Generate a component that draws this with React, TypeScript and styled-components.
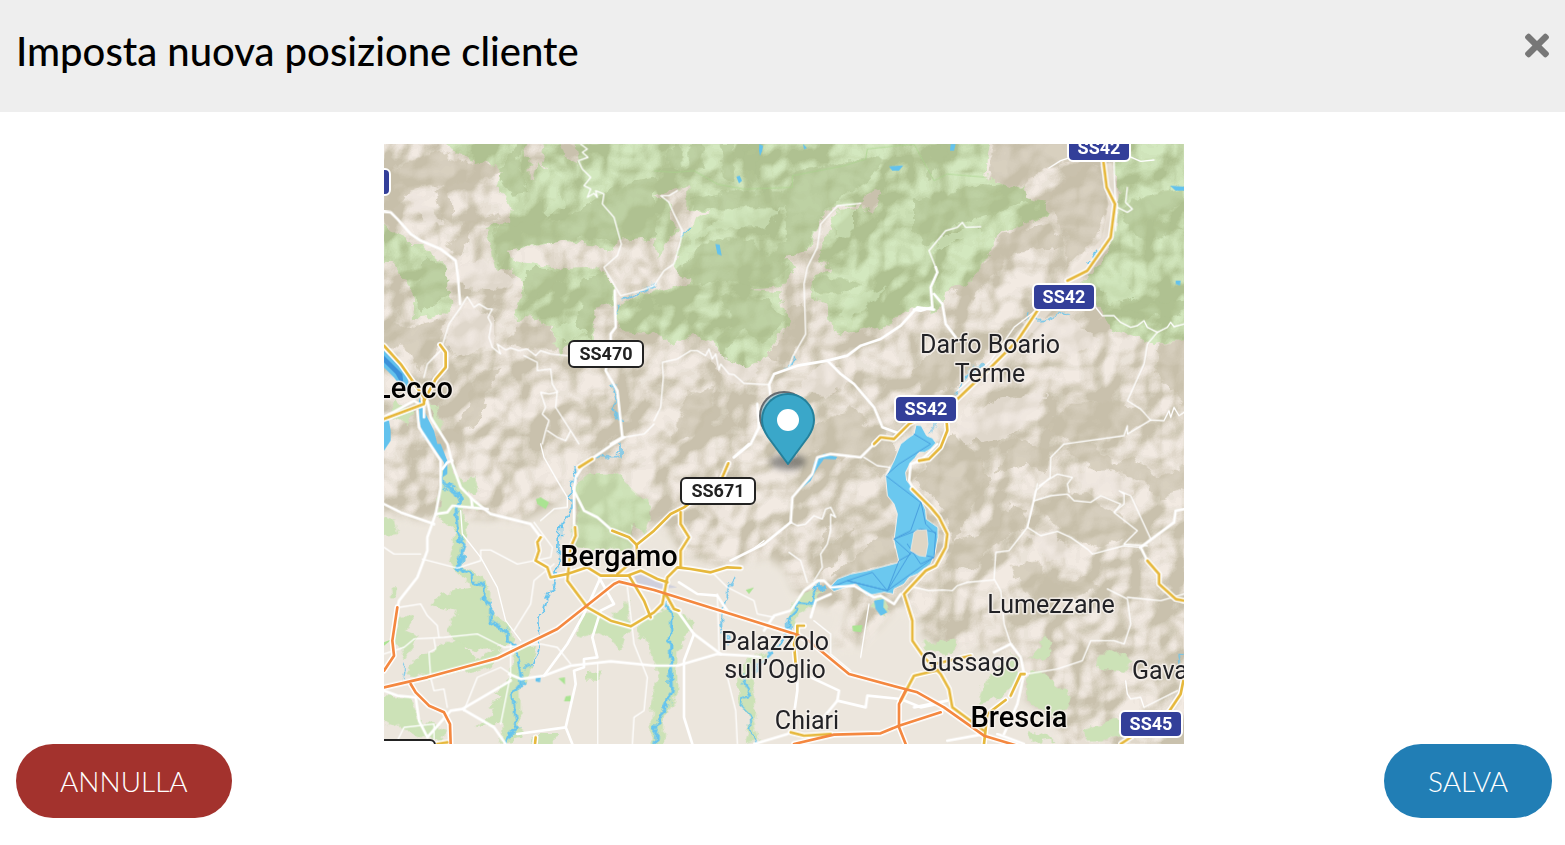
import React from "react";
import styled, { createGlobalStyle } from "styled-components";
import { FaTimes } from "react-icons/fa";

const GlobalStyle = createGlobalStyle`
  *, *::before, *::after { box-sizing: border-box; }
  body {
    margin: 0;
    background: #fff;
    color: #000;
    font-family: Lato, "Liberation Sans", sans-serif;
  }
`;

const Header = styled.header`
  display: flex;
  align-items: flex-start;
  justify-content: space-between;
  height: 112px;
  padding: 28px 16px 0;
  background: #eee;
`;

const Title = styled.h1`
  margin: 0;
  font-size: 40px;
  line-height: 46px;
  font-weight: 500;
`;

const CloseButton = styled.button`
  display: flex;
  padding: 0;
  border: 0;
  background: none;
  color: #777;
  cursor: pointer;
`;

const CloseIcon = styled(FaTimes)`
  width: 24px;
  height: 35px;
`;

const Content = styled.main`
  padding: 32px 13px 24px 16px;
`;

const MapFrame = styled.section`
  display: flex;
  justify-content: center;
`;

const MapDrawing = styled.svg`
  display: block;
  width: 800px;
  max-width: 100%;
  height: auto;
  overflow: hidden;
`;

const Actions = styled.footer`
  display: flex;
  justify-content: space-between;
`;

const ActionButton = styled.button<{ $color: string }>`
  height: 74px;
  padding: 0 44px;
  border: 0;
  border-radius: 37px;
  background: ${(p) => p.$color};
  color: #fff;
  font-family: inherit;
  font-size: 28px;
  font-weight: 300;
  line-height: 36px;
  text-transform: uppercase;
  cursor: pointer;
`;

const PlaceName = styled.text<{ $city?: boolean }>`
  font-family: Roboto, "Liberation Sans", sans-serif;
  font-size: ${(p) => (p.$city ? 29 : 25)}px;
  font-weight: ${(p) => (p.$city ? 500 : 400)};
  fill: ${(p) => (p.$city ? "#000" : "#222226")};
  stroke: rgba(245, 240, 235, 0.85);
  stroke-width: 3px;
  stroke-linejoin: round;
  paint-order: stroke;
  text-anchor: middle;
`;

const ShieldText = styled.text`
  font-family: Roboto, "Liberation Sans", sans-serif;
  font-size: 18px;
  font-weight: 700;
  text-anchor: middle;
`;

/* The geography is stored at three units to the pixel, in six survey tiles. */
type Tile = "TL" | "TM" | "TR" | "BL" | "BM" | "BR";
type Shape = [Tile, string];

const origin: Record<Tile, [number, number]> = {
  TL: [0, 0],
  TM: [810, 0],
  TR: [1590, 0],
  BL: [0, 900],
  BM: [810, 900],
  BR: [1590, 900],
};

const move = (tile: Tile) => `translate(${origin[tile][0]} ${origin[tile][1]})`;

const forests: Shape[] = [
  ["TL", "150,-40 200,20 240,28 280,60 320,50 350,90 340,130 380,180 385,235 305,245 320,300 335,385 380,370 410,410 415,460 395,500 395,535 430,515 510,550 505,600 530,635 560,600 630,590 625,500 690,480 690,400 640,380 700,300 810,285 820,360 800,430 700,490 705,560 810,570 870,605 930,570 990,600 1020,640 1090,670 1140,650 1170,600 1215,540 1195,470 1300,480 1340,560 1370,570 1500,545 1590,490 1650,500 1670,490 1680,430 1720,430 1770,400 1810,340 1850,260 1995,215 1980,170 1930,160 1920,120 1890,130 1800,100 1825,-40"],
  ["TL", "-40,200 70,300 110,300 190,370 190,450 215,480 190,510 90,525 85,440 30,360 -40,360"],
  ["TR", "605,-40 600,60 615,150 600,290 560,350 500,430 560,500 600,560 720,600 850,580 850,-40"],
];
const clearings: Shape[] = [
  ["TL", "430,-20 480,-20 475,40 490,75 460,50 450,115 440,110 440,60 420,30"],
  ["TL", "525,-20 570,-20 580,65 550,50"],
  ["TL", "375,320 450,310 540,290 620,300 670,320 710,290 785,285 730,310 715,370 740,400 810,390 820,440 700,460 660,370 540,375 450,360 385,350"],
  ["TM", "0,150 100,130 100,200 165,205 95,250 60,375 110,420 0,440 -70,450 -100,400 -60,390 0,360 65,260 40,170"],
  ["TM", "620,180 660,138 682,145 655,210 620,190 540,200 520,280 495,350 535,375 480,390 470,460 520,480 530,560 460,700 400,600 405,540 385,470 380,445 285,437 380,430 430,370 390,350 470,310 495,240 530,190"],
];
const darkSlopes: Shape[] = [
  ["TL", "0,90 60,60 170,20 230,55 340,60 350,90 270,110 180,130 150,120 100,130 20,200 0,190"],
  ["TL", "150,140 190,130 210,240 180,225"],
  ["TL", "240,240 330,205 350,220 260,240 230,340 180,310 210,290"],
  ["TL", "0,530 90,550 190,520 150,620 110,690 70,610 0,600"],
  ["TL", "280,690 350,670 310,740 280,850 210,860 250,790"],
  ["TL", "400,550 500,540 520,620 440,610 370,600"],
  ["TM", "400,500 450,480 450,590 400,650 330,640 400,570"],
  ["TM", "100,750 180,730 170,800 120,880 50,900"],
  ["TM", "460,860 590,790 640,830 560,890 420,960"],
  ["TR", "240,-20 480,-20 470,50 360,90 330,120 220,110 230,50"],
  ["TR", "410,160 500,70 570,60 590,170 540,290 460,370 460,280 400,180"],
  ["TR", "270,265 410,240 460,300 290,330 230,400 180,470 100,430 220,350"],
  ["TR", "0,680 80,600 230,570 300,540 120,730 30,750"],
  ["TR", "470,780 600,770 690,800 710,830 620,880 470,900 390,850"],
  ["TR", "740,600 830,580 830,800 720,680"],
  ["BM", "470,10 600,-60 690,-50 735,40 690,95 610,40 520,40"],
  ["BM", "530,400 700,250 735,350 640,380"],
  ["BM", "500,320 540,180 520,300 600,250 550,350 480,400"],
  ["BR", "50,40 120,-30 190,40 230,110 170,200 120,300 90,190 0,110"],
  ["BR", "210,320 330,250 340,190 290,180 250,250 130,290 90,360 190,380"],
  ["BR", "240,90 310,-20 410,20 400,90 340,60"],
  ["BR", "450,20 520,-20 600,60 660,40 730,100 820,60 820,130 740,170 690,120 600,80 560,90"],
  ["BR", "350,170 520,150 630,230 660,270 560,310 450,270"],
  ["BR", "290,370 370,350 430,430 520,390 560,430 460,470 330,440"],
];
const lightSlopes: Shape[] = [
  ["TL", "60,150 110,150 180,240 130,250 100,200"],
  ["TL", "220,370 300,340 400,410 350,440 240,430"],
  ["TL", "180,580 250,480 330,520 330,600 210,640"],
  ["TM", "150,620 240,640 320,690 260,720 190,680"],
  ["TM", "460,690 530,650 590,710 520,760 440,750"],
  ["TR", "120,850 260,760 400,750 300,870 160,900"],
  ["TR", "320,530 450,510 560,590 480,640 380,600"],
  ["BR", "340,270 420,260 480,340 390,350"],
  ["BR", "470,90 600,80 660,150 560,150"],
];
const darkWoods: Shape[] = [
  ["TL", "330,250 540,225 690,130 810,100 810,280 700,300 620,280 420,310 340,370"],
  ["TL", "400,50 420,0 400,0 340,90 380,150 430,140"],
  ["TL", "90,440 130,340 190,370 190,450 110,510"],
  ["TL", "410,410 450,370 530,380 500,440 430,460"],
  ["TL", "600,400 690,390 680,480 630,500 620,590 580,540"],
  ["TM", "110,170 230,140 410,140 420,90 580,50 700,40 640,110 520,190 460,310 380,370 270,400 400,280 390,190 260,190 120,200"],
  ["TM", "150,300 280,280 330,330 400,370 330,430 240,410 120,420 60,390"],
  ["TM", "200,450 340,470 400,520 330,600 260,560 210,640 190,590 240,530"],
  ["TM", "480,400 560,400 630,420 560,450 480,450"],
  ["TM", "40,20 80,0 90,80 50,80"],
  ["TM", "100,0 140,0 150,80 110,80"],
  ["TM", "200,0 240,0 240,110 210,110"],
  ["TM", "280,0 310,0 300,120 270,100"],
  ["TR", "0,170 200,120 330,130 370,170 260,200 110,250 40,310 0,260"],
  ["TR", "40,20 100,0 80,70 40,110"],
  ["TR", "620,200 700,150 810,130 810,170 720,230 810,250 700,290 640,260"],
  ["TR", "600,430 690,480 810,470 800,510 700,520 620,490"],
];
const lightWoods: Shape[] = [
  ["TL", "480,190 530,150 540,190 490,220"],
  ["TL", "720,330 790,300 810,330 760,380 720,370"],
  ["TL", "510,560 560,535 610,560 550,600"],
  ["TM", "110,280 240,200 380,190 340,250 200,250 130,290 70,370"],
  ["TM", "530,220 600,190 600,260 550,290"],
  ["TM", "560,520 600,450 700,430 640,490 580,540"],
  ["TR", "80,280 170,250 210,270 110,300 60,330"],
  ["TR", "550,410 620,390 660,460 590,480"],
];
const bergamoHill =
  "570,130 610,90 700,90 750,140 795,180 800,220 780,265 740,240 750,300 740,325 580,310 560,280 580,200";
const cityGreens: Shape[] = [
  ["BL", bergamoHill],
  ["BL", "170,80 200,60 230,110 270,100 282,130 250,150 290,190 235,200 250,260 240,320 230,370 290,390 322,440 320,500 380,550 390,600 300,620 220,600 190,560 215,500 140,480 170,450 260,430 220,380 195,350 215,270 160,220 170,120"],
  ["BL", "385,610 450,600 440,690 410,720 410,880 350,900 370,760 330,750 380,700"],
  ["BL", "-20,220 30,230 40,270 -20,280"],
  ["BL", "50,520 95,510 70,560 100,580 60,650 45,610 20,600"],
  ["BL", "60,690 100,640 190,590 240,600 280,650 330,610 370,630 310,670 220,690 130,700"],
  ["BL", "590,520 640,500 680,530 730,470 740,550 710,620 680,590 640,570 600,580 575,570"],
  ["BL", "600,680 650,680 640,710 610,710"],
  ["BL", "-20,760 80,760 100,820 190,860 170,900 40,850 -20,820"],
  ["BL", "310,780 380,740 380,850 340,840 280,850 330,810"],
  ["BL", "450,870 520,870 500,920 440,920"],
  ["BL", "20,430 45,430 40,460 25,460"],
  ["BM", "0,510 60,480 120,540 90,590 70,620 70,740 30,830 30,920 -10,920 -10,800 10,700 -20,590 -50,580 -40,520"],
  ["BM", "400,530 430,460 510,430 490,470 440,510 410,550"],
  ["BM", "250,690 290,640 350,620 290,680 310,760 300,820 320,890 270,900 290,830 250,780"],
  ["BM", "650,480 690,460 700,510 670,500"],
  ["BR", "20,595 120,590 120,630 50,620"],
  ["BR", "215,710 240,680 300,630 320,680 280,750 190,780"],
  ["BR", "340,690 380,680 470,760 440,830 340,770"],
  ["BR", "350,640 400,570 420,620 390,650"],
  ["BR", "555,630 620,625 660,650 620,690 550,670"],
  ["BR", "510,860 560,840 610,820 640,860 560,890 520,890"],
  ["BR", "340,860 430,890 350,900"],
  ["TL", "35,765 85,810 75,840 20,820"],
  ["TL", "145,785 160,790 175,860 160,865"],
];
const parks: Shape[] = [
  ["BL", "456,165 470,160 495,175 485,195 460,180"],
  ["BL", "523,703 543,700 543,722"],
  ["BL", "545,757 560,755 560,772 540,772"],
  ["BM", "275,438 300,430 285,450"],
  ["BM", "595,545 625,543 622,565 597,562"],
  ["BL", "0,595 25,585 0,605"],
];

const water: Shape[] = [
  ["TL", "0,620 20,640 50,670 70,700 80,750 60,740 30,700 0,670"],
  ["TL", "105,760 120,800 150,860 160,900 180,930 190,960 150,910 120,880 105,830"],
  ["TL", "0,820 15,830 20,860 20,890 0,920"],
  ["BL", "140,0 170,0 190,50 190,90 175,100 180,55"],
  ["TM", "316,0 327,5 325,20 318,36 315,20"],
  ["TM", "247,98 257,95 264,110 255,118"],
  ["TM", "184,300 197,302 203,335 190,330"],
  ["TM", "447,0 459,12 450,16"],
  ["TM", "705,67 748,64 735,80 715,80"],
  ["TR", "110,0 125,0 120,20 108,20"],
  ["TR", "768,125 810,128 810,140 785,140"],
  ["TR", "785,410 800,410 798,425 785,420"],
  ["BM", "475,95 480,55 510,30 550,38 545,46 510,45 485,80 470,110 440,135"],
  ["BL", "455,700 470,700 468,715 455,712"],
  ["BM", "660,470 690,465 688,490 700,505 680,515 665,495"],
];
const lake =
  "1596,843 1612,845 1620,860 1628,875 1645,882 1656,897 1640,915 1622,925 1605,925 1593,942 1580,955 1565,985 1568,1010 1600,1040 1612,1070 1625,1098 1627,1125 1645,1138 1662,1150 1662,1180 1653,1230 1640,1260 1600,1290 1575,1300 1560,1320 1530,1335 1528,1350 1500,1345 1450,1355 1432,1335 1415,1320 1370,1335 1350,1342 1337,1330 1360,1305 1400,1290 1450,1280 1545,1255 1530,1190 1540,1110 1530,1080 1510,1055 1505,1000 1530,950 1550,900 1575,880 1590,870";
const ferryLines: Shape[] = [
  ["BM", "780,-30 830,0 735,60 695,95 800,175 770,260 720,285 770,330 735,350 700,440 580,410 530,430"],
  ["BM", "700,440 655,385 580,410 700,440 770,325 840,340 770,390 700,440"],
  ["BM", "720,285 800,255 845,265 840,340 800,360 760,300"],
  ["BM", "800,170 815,240 845,270"],
];
const rivers: [Tile, string, number][] = [
  ["BL", "175,100 180,122 215,140 235,170 215,200 220,270 240,300 225,375 260,390 265,415 300,425 300,470 320,480 320,530 370,560 370,590 395,605 410,690 410,720 385,750 395,840 405,850 370,880 365,900", 9],
  ["BL", "705,0 705,35 665,35 635,47", 4],
  ["BL", "570,70 575,100 560,120 565,190 530,250 525,370 515,420 490,460 480,500 462,520 465,610 445,660 420,670", 5],
  ["BL", "58,660 55,690 62,705", 4],
  ["BM", "35,450 50,520 50,640 55,740 30,800 10,840 0,900", 10],
  ["BM", "515,425 485,425 475,480 435,475 430,500 400,530 400,560 350,630 300,680", 8],
  ["BM", "265,680 275,720 295,750 265,755 260,790 290,820 295,870 310,900", 6],
  ["BM", "240,400 225,410 220,460 205,490 205,550 225,600", 5],
  ["TM", "418,635 412,655 400,670", 5],
  ["TM", "105,245 90,260 88,280", 4],
  ["TL", "708,470 780,440 810,425", 5],
  ["TL", "697,480 702,510", 4],
  ["TL", "682,715 697,765 690,795 713,840", 5],
  ["TR", "560,300 550,325 530,340 525,360", 5],
  ["TR", "465,505 430,515 400,528 370,530 340,530 345,510", 4],
  ["TR", "215,665 180,668 130,740 125,755", 5],
  ["TR", "62,835 45,870", 3],
  ["BR", "810,625 795,635 800,660", 4],
];
const minorRoads: Shape[] = [
  ["TL", "590,0 610,15 595,25 612,40 583,50 595,75 620,100 600,125 620,135 610,160 630,148 640,160 635,140 660,150 655,180 690,220 712,300 700,335 660,370 695,430 710,455 770,440 810,425 840,380 870,360 890,290 895,260 870,210 855,175 830,155 855,155 880,140"],
  ["TL", "230,490 250,458 270,490 285,480 310,495 325,495 312,520 322,540 315,580 325,610 350,630 340,600 365,618 380,612 405,620 430,615 455,635 470,620 500,630 550,635"],
  ["TL", "420,635 460,655 460,680 500,675 505,720 520,745 495,750 470,745 485,790 475,810 495,830 485,860 475,900"],
  ["TL", "520,740 515,790 560,860 545,890 520,880 490,860"],
  ["TL", "560,860 585,900"],
  ["TL", "120,700 130,660 170,620 195,540 230,490"],
  ["TL", "720,880 780,870 810,840"],
  ["TM", "345,722 270,718 240,692 225,690 200,660 195,678 185,630 175,645 165,615 155,635 130,620 110,620 70,645 25,655 28,700 20,790 0,830"],
  ["TM", "620,178 550,185 500,240 490,310 460,370 450,420 455,570 415,640 405,670"],
  ["TR", "65,370 45,320 95,260 130,250 145,235 155,250 200,248"],
  ["TR", "405,72 440,50 470,40 640,35 680,52 720,48"],
  ["TR", "600,50 603,150 610,190 605,260"],
  ["TR", "610,190 640,205 655,195 635,175 640,130"],
  ["TR", "545,490 565,515 600,515 620,535 650,550 670,545 690,530 700,550 730,565 760,550 770,535 780,548 810,540"],
  ["TR", "730,565 700,600 690,660 640,770 680,795 710,828 640,870 640,845 630,875 450,900 410,940 408,1000 365,1040 340,1150"],
  ["TR", "710,828 750,830 765,800 770,820 780,790 795,815 810,805"],
  ["TR", "365,500 300,550 230,650 130,740"],
  ["BR", "360,170 410,155 460,150 480,170 530,175 560,155 620,180 600,205 625,225 670,260 630,300 700,305"],
  ["BR", "375,125 430,90 475,100 460,120 465,145"],
  ["BR", "600,205 630,180 630,150 615,140 650,155 710,285"],
  ["BR", "340,250 380,275 430,262 470,280 520,315 535,330 630,305 680,310"],
  ["BR", "370,120 360,170 340,250 285,320 245,325 240,405 260,440 270,540 290,600"],
  ["BR", "0,430 45,440 85,438 115,440 130,425 160,415 240,408"],
  ["BR", "580,435 640,465 650,540 630,600 600,590 530,590 505,650 430,675 340,690"],
  ["BR", "640,460 740,470 810,450"],
  ["BR", "635,710 640,750 650,765 680,760 690,790 790,740"],
  ["BM", "630,40 670,65 708,70 695,95"],
  ["BM", "410,235 430,245 455,240 480,215 505,225 515,195 530,190 545,220 530,210 530,260 520,300 500,330 505,370 480,410"],
  ["BM", "460,415 440,350 405,325"],
  ["BM", "230,350 290,320 330,290"],
  ["BM", "180,390 220,430 300,470 310,510 360,520"],
  ["BM", "190,450 195,620"],
  ["BM", "220,700 245,800 250,900"],
  ["BM", "480,530 530,570 530,630 590,680"],
  ["BM", "645,480 620,640"],
  ["BL", "470,0 480,40 520,110 550,160 550,190 510,195 470,230"],
  ["BL", "230,200 235,270 290,340 340,430 365,530 410,590"],
  ["BL", "115,345 220,372 290,350 290,318 320,318 400,360 500,340 505,310 450,235"],
  ["BL", "0,310 30,330 110,330"],
  ["BL", "45,490 110,480 130,515 160,545 165,580"],
  ["BL", "90,585 180,580 280,570 360,610 470,600 520,610 560,660"],
  ["BL", "510,360 450,410 440,480 390,560"],
  ["BL", "640,660 640,900"],
  ["BL", "730,430 750,600 790,700 780,800 750,820 745,900"],
  ["BL", "240,800 280,700 350,670 380,690 350,840"],
  ["BL", "0,630 60,610 90,585"],
  ["BL", "150,585 155,615 135,625 140,700 150,740 180,735 190,790"],
  ["BL", "380,600 380,700"],
  ["BL", "35,900 60,850 150,840 150,900"],
];
const mainRoads: Shape[] = [
  ["TL", "0,203 20,205 40,225 80,270 110,290 170,315 215,350 222,400 228,480"],
  ["TL", "692,440 695,550 680,570 680,600 665,680 700,740 715,880 680,900"],
  ["TL", "720,880 680,905 600,960 575,1000 570,1040 600,1100 640,1120 685,1160"],
  ["BL", "570,130 570,240"],
  ["TL", "0,820 90,770 120,790 120,820"],
  ["TL", "130,770 140,820 190,900 205,960 230,1030 270,1070 320,1110 440,1140 470,1180"],
  ["BL", "100,-100 105,-50 170,50 170,130 155,210 130,280 130,320 100,400 45,470 38,500"],
  ["BL", "0,180 50,205 150,240"],
  ["BL", "155,210 190,205 205,185 310,195"],
  ["BL", "265,190 262,165"],
  ["BL", "175,75 190,55 205,50"],
  ["BL", "0,740 40,755 95,760 105,830 130,880 200,800 235,795 380,710"],
  ["BL", "235,795 330,850 365,900"],
  ["BL", "375,690 410,705 480,695 560,665 680,652 810,665 880,665 1000,630 1090,635 1130,640"],
  ["BL", "480,695 550,600 600,510 650,400"],
  ["BL", "645,400 690,480 650,500 625,580 640,640 600,645 600,670 570,680 575,720 545,850 400,870"],
  ["BL", "545,850 565,900"],
  ["BM", "75,415 130,450 190,455 220,500"],
  ["BM", "70,500 120,570 90,650 90,820 115,900"],
  ["BM", "120,570 200,630"],
  ["BM", "285,0 240,40"],
  ["BM", "410,235 415,160 475,90 490,40 530,30 620,40 655,5"],
  ["BM", "410,235 330,300 230,350"],
  ["BM", "330,560 360,515 410,500 450,440 490,410 510,410 530,430 600,425 660,460 680,455 720,480 740,450"],
  ["BM", "530,450 485,470 470,520"],
  ["BM", "430,660 430,740 420,810"],
  ["BM", "470,700 555,740 550,770 635,790 640,755 740,765 800,790 850,780"],
  ["BM", "550,770 500,830"],
  ["BM", "300,900 400,870"],
  ["TM", "350,760 345,722 360,690 430,665 520,650 580,635 620,605 680,585 740,545 790,490 840,497"],
  ["TM", "520,650 560,690 600,720 660,790 685,850 740,870"],
  ["TM", "315,850 310,780"],
  ["TM", "315,850 290,900 240,940"],
  ["TR", "65,370 70,385 50,430 55,490 20,500 0,497"],
  ["TR", "60,450 85,480 95,540 125,580"],
  ["BM", "850,0 800,50 770,60 765,110 780,140"],
  ["BR", "680,310 780,235 785,200 810,195"],
  ["BR", "680,310 700,350"],
  ["BR", "240,625 290,600 320,640 330,690"],
  ["BR", "100,770 0,790"],
  ["BR", "210,870 100,890"],
  ["BR", "250,870 330,900"],
  ["BR", "270,870 310,780 330,690"],
];
const yellowRoads: Shape[] = [
  ["TL", "0,605 50,660 120,760 120,780 0,825"],
  ["TL", "168,602 185,625 185,670 155,705 120,770"],
  ["BL", "585,70 625,45"],
  ["BL", "470,280 460,295 465,320 455,350 490,370 500,400 550,390 610,370 650,395 730,395 770,380 820,405 850,415"],
  ["BL", "573,250 575,275 560,310 550,410 610,490 680,530 740,547 810,505 835,480 850,400 880,370 920,375 980,385 1030,370 1070,372"],
  ["BL", "685,260 735,280 758,302 810,260 860,210 900,190 940,160"],
  ["BL", "758,302 760,340 700,390"],
  ["BL", "735,395 780,470 800,520"],
  ["BL", "890,205 890,240 915,280 890,320 890,370"],
  ["BM", "35,450 60,495 75,500"],
  ["BM", "223,58 205,100"],
  ["BM", "450,545 430,545 430,570 420,600 425,660"],
  ["TM", "660,900 680,880 720,885 765,840 800,820"],
  ["TR", "568,50 578,130 603,180 590,280 520,380 460,410"],
  ["TR", "370,500 310,590 225,675 125,770"],
  ["TR", "97,820 100,860 80,910 45,945 15,950"],
  ["BR", "-5,135 50,190 75,220 100,270 95,310 65,365 35,380 -30,450 -5,530 -5,590 30,640 80,690 105,735 115,790 210,860"],
  ["BR", "85,675 0,695 -40,770"],
  ["BR", "60,660 170,635"],
  ["BR", "332,690 320,690 290,755"],
  ["BR", "275,768 220,810 210,900"],
  ["BR", "700,350 735,390 735,420 785,465 810,470"],
  ["BR", "810,700 800,750 760,810"],
  ["BR", "620,900 650,880"],
  ["BM", "410,865 450,875 530,870"],
  ["BL", "160,900 190,895"],
  ["BL", "455,880 453,900"],
];
const motorways: Shape[] = [
  ["BL", "0,730 130,700 340,643 520,555 690,420 705,413 810,438 1240,572 1280,595 1395,690 1600,745 1680,790 1800,875 1900,905"],
  ["BL", "40,490 25,590 30,635 0,680"],
  ["BL", "80,720 95,745 135,785 180,805 198,840 200,900"],
  ["BM", "420,900 540,872 680,868 735,845 860,805"],
  ["BM", "755,740 735,780 735,850 755,900"],
];

const Polygons = ({ shapes, fill }: { shapes: Shape[]; fill: string }) => (
  <g fill={fill}>
    {shapes.map(([tile, points], i) => (
      <polygon key={i} points={points} transform={move(tile)} />
    ))}
  </g>
);

const Lines = ({ shapes, color, width }: { shapes: Shape[]; color: string; width: number }) => (
  <g fill="none" stroke={color} strokeWidth={width} strokeLinejoin="round" strokeLinecap="round">
    {shapes.map(([tile, points], i) => (
      <polyline key={i} points={points} transform={move(tile)} />
    ))}
  </g>
);

/* Stepped relief: twenty tones from the shaded slope to the sunlit one. */
const tones = (dark: number, light: number) =>
  Array.from({ length: 20 }, (_, i) => {
    const step = Math.min(1, Math.max(0, (i - 8) / 11));
    return (dark + (light - dark) * step).toFixed(3);
  }).join(" ");

type ReliefProps = { id: string; dark: [number, number, number]; light: [number, number, number] };
const Relief = ({ id, dark, light }: ReliefProps) => (
  <filter id={id} x="0" y="0" width="100%" height="100%" colorInterpolationFilters="sRGB">
    <feTurbulence type="fractalNoise" baseFrequency="0.018" numOctaves="3" seed="11" result="noise" />
    <feDiffuseLighting in="noise" surfaceScale="22" diffuseConstant="1" lightingColor="#fff">
      <feDistantLight azimuth="225" elevation="50" />
    </feDiffuseLighting>
    <feComponentTransfer>
      <feFuncR type="discrete" tableValues={tones(dark[0], light[0])} />
      <feFuncG type="discrete" tableValues={tones(dark[1], light[1])} />
      <feFuncB type="discrete" tableValues={tones(dark[2], light[2])} />
    </feComponentTransfer>
  </filter>
);

type ShieldProps = { x: number; y: number; width: number; label: string; blue?: boolean };
const Shield = ({ x, y, width, label, blue }: ShieldProps) => (
  <g>
    <rect
      x={x}
      y={y}
      width={width}
      height={26}
      rx={5}
      fill={blue ? "#333f99" : "#fff"}
      stroke={blue ? "#fff" : "#222"}
      strokeWidth={2}
    />
    {label && (
      <ShieldText x={x + width / 2} y={y + 19} fill={blue ? "#fff" : "#222"}>
        {label}
      </ShieldText>
    )}
  </g>
);

const pinPath = "M404 320 L384 293 Q378 284 378 276 A26 26 0 0 1 430 276 Q430 284 424 293 Z";

const PositionMap = () => (
  <MapDrawing viewBox="0 0 800 600" role="img" aria-label="Mappa della posizione cliente">
    <defs>
      <Relief id="hills" dark={[0.79, 0.76, 0.68]} light={[0.95, 0.92, 0.89]} />
      <Relief id="woods" dark={[0.69, 0.76, 0.57]} light={[0.83, 0.91, 0.75]} />
      <filter id="soft" x="-10%" y="-10%" width="120%" height="120%">
        <feGaussianBlur stdDeviation="12" />
      </filter>
      <filter id="rough" x="0" y="0" width="100%" height="100%">
        <feTurbulence type="fractalNoise" baseFrequency="0.03" numOctaves="3" seed="4" />
        <feDisplacementMap in="SourceGraphic" scale="34" xChannelSelector="R" yChannelSelector="G" />
      </filter>
      <filter id="pinShade" x="-50%" y="-100%" width="200%" height="300%">
        <feGaussianBlur stdDeviation="3" />
      </filter>
      <mask id="woodland" maskUnits="userSpaceOnUse" x="0" y="0" width="800" height="600">
        <g transform="scale(0.333333)">
          <g filter="url(#rough)">
            <Polygons shapes={forests} fill="#fff" />
            <Polygons shapes={clearings} fill="#000" />
          </g>
          <Polygons shapes={[["BL", bergamoHill]]} fill="#777" />
        </g>
      </mask>
    </defs>

    <rect width="800" height="600" filter="url(#hills)" />
    <g transform="scale(0.333333)">
      <g opacity="0.6" filter="url(#rough)">
        <Polygons shapes={darkSlopes} fill="#c7bfa9" />
        <Polygons shapes={lightSlopes} fill="#efe7e0" />
      </g>
      <polygon
        filter="url(#soft)"
        fill="#ece6dd"
        points="-60,1090 130,1130 200,1080 260,1120 420,1130 520,1080 560,1000 580,1180 700,1200 780,1170 830,1130 900,1230 1000,1270 1150,1240 1200,1270 1250,1370 1400,1400 1340,1510 1430,1500 1560,1370 1640,1500 1850,1530 1920,1560 1920,1660 2000,1720 2060,1860 -60,1860"
      />
      <polyline points="2165,60 2190,180 2170,290 2070,400 1900,590 1750,740 1690,850" fill="none" stroke="#ece4db" strokeWidth="34" opacity="0.7" />
      <g filter="url(#rough)">
        <Polygons shapes={cityGreens} fill="#cce2b7" />
      </g>
    </g>
    <g mask="url(#woodland)">
      <rect width="800" height="600" filter="url(#woods)" />
      <g transform="scale(0.333333)">
        <g opacity="0.6" filter="url(#rough)">
          <Polygons shapes={darkWoods} fill="#afc191" />
          <Polygons shapes={lightWoods} fill="#d1e7bd" />
        </g>
      </g>
    </g>

    <g transform="scale(0.333333)">
      <Polygons shapes={parks} fill="#aae392" />
      <polygon points="750,1295 770,1292 850,1320 880,1330 830,1335 760,1320" fill="#d0d0dc" />
      <polyline points="810,80 870,85 930,80 1000,120 1080,135 1225,130 1225,95 1380,65 1445,45 1450,15 1590,0 1650,110 1690,90 1810,100" fill="none" stroke="#a9d58c" strokeWidth="2" />
      <polygon points={lake} fill="#6bc8ef" stroke="#f4efe8" strokeWidth="3" />
      <Lines shapes={ferryLines} color="#489fdf" width={3} />
      <polygon points="1590,1165 1600,1158 1628,1158 1632,1200 1625,1238 1605,1235 1580,1220" fill="#dfd6c5" stroke="#f4efe8" strokeWidth="2" />
      <Polygons shapes={water} fill="#63c2ed" />
      <polygon points="0,635 25,660 55,690 60,735 35,690 0,655" fill="#3c91d9" />
      <g fill="none" stroke="#66c4ee" strokeLinejoin="round" filter="url(#rough)">
        {rivers.map(([tile, points, width], i) => (
          <polyline key={i} points={points} strokeWidth={width} transform={move(tile)} />
        ))}
      </g>
      <Lines shapes={minorRoads} color="#fff" width={4} />
      <Lines shapes={mainRoads} color="#fff" width={8} />
      <Lines shapes={yellowRoads} color="#fff" width={17} />
      <Lines shapes={motorways} color="#fff" width={17} />
      <Lines shapes={yellowRoads} color="#e6b83c" width={8} />
      <Lines shapes={motorways} color="#f48840" width={8} />
    </g>

    <PlaceName $city x="30" y="254">Lecco</PlaceName>
    <PlaceName $city x="235" y="422">Bergamo</PlaceName>
    <PlaceName $city x="635" y="583">Brescia</PlaceName>
    <PlaceName x="606" y="209">Darfo Boario</PlaceName>
    <PlaceName x="606" y="238">Terme</PlaceName>
    <PlaceName x="667" y="469">Lumezzane</PlaceName>
    <PlaceName x="391" y="506">Palazzolo</PlaceName>
    <PlaceName x="391" y="534">sull’Oglio</PlaceName>
    <PlaceName x="423" y="585">Chiari</PlaceName>
    <PlaceName x="586" y="527">Gussago</PlaceName>
    <PlaceName x="776" y="535">Gava</PlaceName>

    <Shield x={-56} y={25} width={62} label="" blue />
    <Shield x={-20} y={596} width={71} label="" />
    <Shield x={684} y={-9} width={62} label="SS42" blue />
    <Shield x={649} y={140} width={62} label="SS42" blue />
    <Shield x={511} y={252} width={62} label="SS42" blue />
    <Shield x={736} y={567} width={62} label="SS45" blue />
    <Shield x={185} y={197} width={74} label="SS470" />
    <Shield x={297} y={334} width={74} label="SS671" />

    <ellipse cx="404" cy="318" rx="18" ry="8" fill="#555" opacity="0.6" filter="url(#pinShade)" />
    <circle cx="400" cy="272" r="24" fill="#a9c6cf" stroke="#666b70" strokeWidth="2" />
    <path d={pinPath} fill="#3aa7c9" stroke="#24809b" strokeWidth="2" strokeLinejoin="round" />
    <circle cx="404" cy="276" r="11" fill="#fff" />
  </MapDrawing>
);

export default function App() {
  return (
    <>
      <GlobalStyle />
      <Header>
        <Title>Imposta nuova posizione cliente</Title>
        <CloseButton type="button" aria-label="Chiudi">
          <CloseIcon />
        </CloseButton>
      </Header>
      <Content>
        <MapFrame>
          <PositionMap />
        </MapFrame>
        <Actions>
          <ActionButton type="button" $color="#a3322d">Annulla</ActionButton>
          <ActionButton type="button" $color="#217eb5">Salva</ActionButton>
        </Actions>
      </Content>
    </>
  );
}
